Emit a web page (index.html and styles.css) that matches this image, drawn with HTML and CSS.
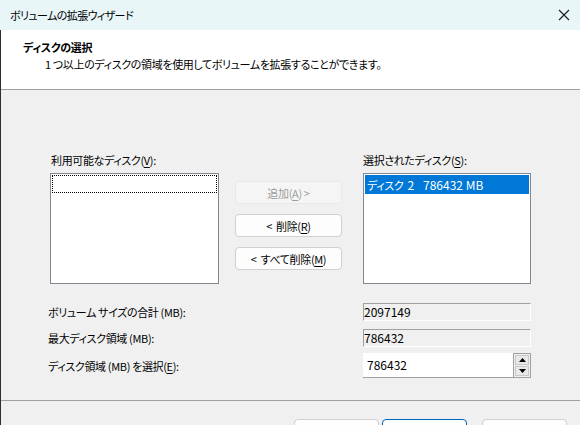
FILE: index.html
```html
<!DOCTYPE html>
<html lang="ja">
<head>
<meta charset="utf-8">
<link rel="stylesheet" href="styles.css">
</head>
<body>
<div class="window">
  <div class="titlebar">
    <span class="title">ボリュームの拡張ウィザード</span>
    <svg class="close" width="12" height="12" viewBox="0 0 12 12"><path d="M1 1L11 11M11 1L1 11" stroke="#1a1a1a" stroke-width="1.1" fill="none"/></svg>
  </div>
  <div class="frame">
    <div class="header">
      <div class="h-title">ディスクの選択</div>
      <div class="h-sub">1 つ以上のディスクの領域を使用してボリュームを拡張することができます。</div>
    </div>
    <div class="body">
      <div class="lists">
        <div class="col col-left">
          <div class="label">利用可能なディスク(<u>V</u>):</div>
          <div class="listbox"><div class="focus"></div></div>
        </div>
        <div class="col-mid">
          <div class="btn disabled">追加(<u>A</u>) &gt;</div>
          <div class="btn"><span class="lt">&lt;</span>削除(<u>R</u>)</div>
          <div class="btn"><span class="lt">&lt;</span>すべて削除(<u>M</u>)</div>
        </div>
        <div class="col col-right">
          <div class="label">選択されたディスク(<u>S</u>):</div>
          <div class="listbox"><div class="item"><span class="disk">ディスク<span class="sp">2</span></span><span class="num">786432 MB</span></div></div>
        </div>
      </div>
      <div class="rows">
        <div class="row r1">
          <div class="rlabel">ボリューム サイズの合計 (MB):</div>
          <div class="ro num">2097149</div>
        </div>
        <div class="row r2">
          <div class="rlabel">最大ディスク領域 (MB):</div>
          <div class="ro num">786432</div>
        </div>
        <div class="row r3">
          <div class="rlabel">ディスク領域 (MB) を選択(<u>E</u>):</div>
          <div class="spin">
            <div class="spin-input num">786432</div>
            <div class="spin-btns">
              <div class="sb"><svg width="7" height="4" viewBox="0 0 7 4"><polygon points="0,4 7,4 3.5,0" fill="#000"/></svg></div>
              <div class="sb"><svg width="7" height="4" viewBox="0 0 7 4"><polygon points="0,0 7,0 3.5,4" fill="#000"/></svg></div>
            </div>
          </div>
        </div>
      </div>
    </div>
    <div class="footer">
      <div class="fbtn"></div>
      <div class="fbtn default"></div>
      <div class="fbtn last"></div>
    </div>
  </div>
</div>
</body>
</html>
```
FILE: styles.css
```css
html, body {
  margin: 0;
  padding: 0;
}
body {
  width: 580px;
  height: 425px;
  overflow: hidden;
  background: #f0f0f0;
  font-family: "Noto Sans CJK JP", "Noto Sans", sans-serif;
  font-size: 11px;
  letter-spacing: -0.35px;
  font-feature-settings: "palt";
  color: #000;
}
u {
  text-decoration: underline;
  text-underline-offset: 2px;
}
.num {
  font-size: 12px;
  letter-spacing: 0;
}
.window {
  width: 580px;
  height: 425px;
  overflow: hidden;
}
.titlebar {
  height: 30px;
  background: #e8f6f8;
  display: flex;
  align-items: center;
  justify-content: space-between;
  padding: 0 10px 0 10px;
  box-sizing: border-box;
}
.title {
  font-size: 11px;
  letter-spacing: -0.6px;
  line-height: 16px;
}
.frame {
  border-left: 1px solid #2e2e2e;
  height: 395px;
  box-sizing: border-box;
}
.header {
  background: #fff;
  height: 60px;
  box-sizing: border-box;
  padding-top: 9px;
  border-bottom: 1px solid #a0a0a0;
}
.h-title {
  font-weight: bold;
  line-height: 16px;
  padding-left: 22px;
}
.h-sub {
  line-height: 16px;
  padding-left: 44px;
  margin-top: 1px;
}
.body {
  height: 311px;
  box-sizing: border-box;
  padding-top: 62px;
  border-bottom: 1px solid #a0a0a0;
}
.lists {
  display: flex;
  padding-left: 49px;
}
.label {
  line-height: 16px;
  height: 16px;
  margin-bottom: 5px;
  padding-left: 1px;
}
.col-left .listbox {
  width: 169px;
}
.col-right .listbox {
  width: 168px;
}
.col-right .label {
  padding-left: 0;
}
.listbox {
  height: 111px;
  box-sizing: border-box;
  border: 1px solid #828790;
  background: #fff;
  padding: 1px;
}
.focus {
  height: 18px;
  box-sizing: border-box;
  border: 1px dotted #000;
}
.item {
  height: 19px;
  background: #0078d7;
  color: #fff;
  line-height: 19px;
  padding-left: 2px;
  display: flex;
}
.disk {
  width: 56px;
}
.sp {
  margin-left: 4px;
  font-size: 12px;
  letter-spacing: 0;
}
.col-mid {
  width: 107px;
  margin-left: 16px;
  margin-right: 21px;
  padding-top: 29px;
  display: flex;
  flex-direction: column;
  gap: 10px;
}
.btn {
  height: 23px;
  box-sizing: border-box;
  border: 1px solid #d0d0d0;
  border-radius: 4px;
  background: #fdfdfd;
  display: flex;
  align-items: center;
  justify-content: center;
  line-height: 16px;
}
.lt {
  margin-right: 4px;
}
.btn.disabled {
  background: #f5f5f5;
  border-color: #e8e8e8;
  color: #9d9d9d;
}
.rows {
  margin-top: 19px;
  padding-left: 47px;
}
.row {
  display: flex;
  align-items: center;
}
.rlabel {
  width: 315px;
  line-height: 16px;
}
.r1, .r2 {
  height: 18px;
}
.r1 {
  margin-bottom: 8px;
}
.r2 {
  margin-bottom: 6px;
}
.r3 {
  height: 25px;
}
.ro {
  width: 168px;
  height: 18px;
  box-sizing: border-box;
  border-top: 1px solid #a0a0a0;
  border-left: 1px solid #a0a0a0;
  border-right: 1px solid #fff;
  border-bottom: 1px solid #fff;
  background: #f0f0f0;
  line-height: 16px;
}
.spin {
  width: 168px;
  height: 25px;
  display: flex;
}
.spin-input {
  flex: 1;
  background: #fff;
  box-sizing: border-box;
  border-bottom: 1px solid #a0a0a0;
  line-height: 24px;
  padding-left: 4px;
}
.spin-btns {
  width: 18px;
  box-sizing: border-box;
  border: 1px solid #a0a0a0;
  background: #f0f0f0;
  display: flex;
  flex-direction: column;
  padding: 1px;
  gap: 1px;
}
.sb {
  flex: 1;
  background: #e8e8e8;
  border: 1px solid #c8c8c8;
  display: flex;
  align-items: center;
  justify-content: center;
}
.footer {
  display: flex;
  padding-top: 18px;
  padding-left: 293px;
}
.fbtn {
  width: 85px;
  height: 24px;
  box-sizing: border-box;
  border: 1px solid #d0d0d0;
  border-radius: 4px;
  background: #fdfdfd;
  margin-right: 3px;
}
.fbtn.default {
  border: 1px solid #0067c0;
  margin-right: 15px;
}
```
